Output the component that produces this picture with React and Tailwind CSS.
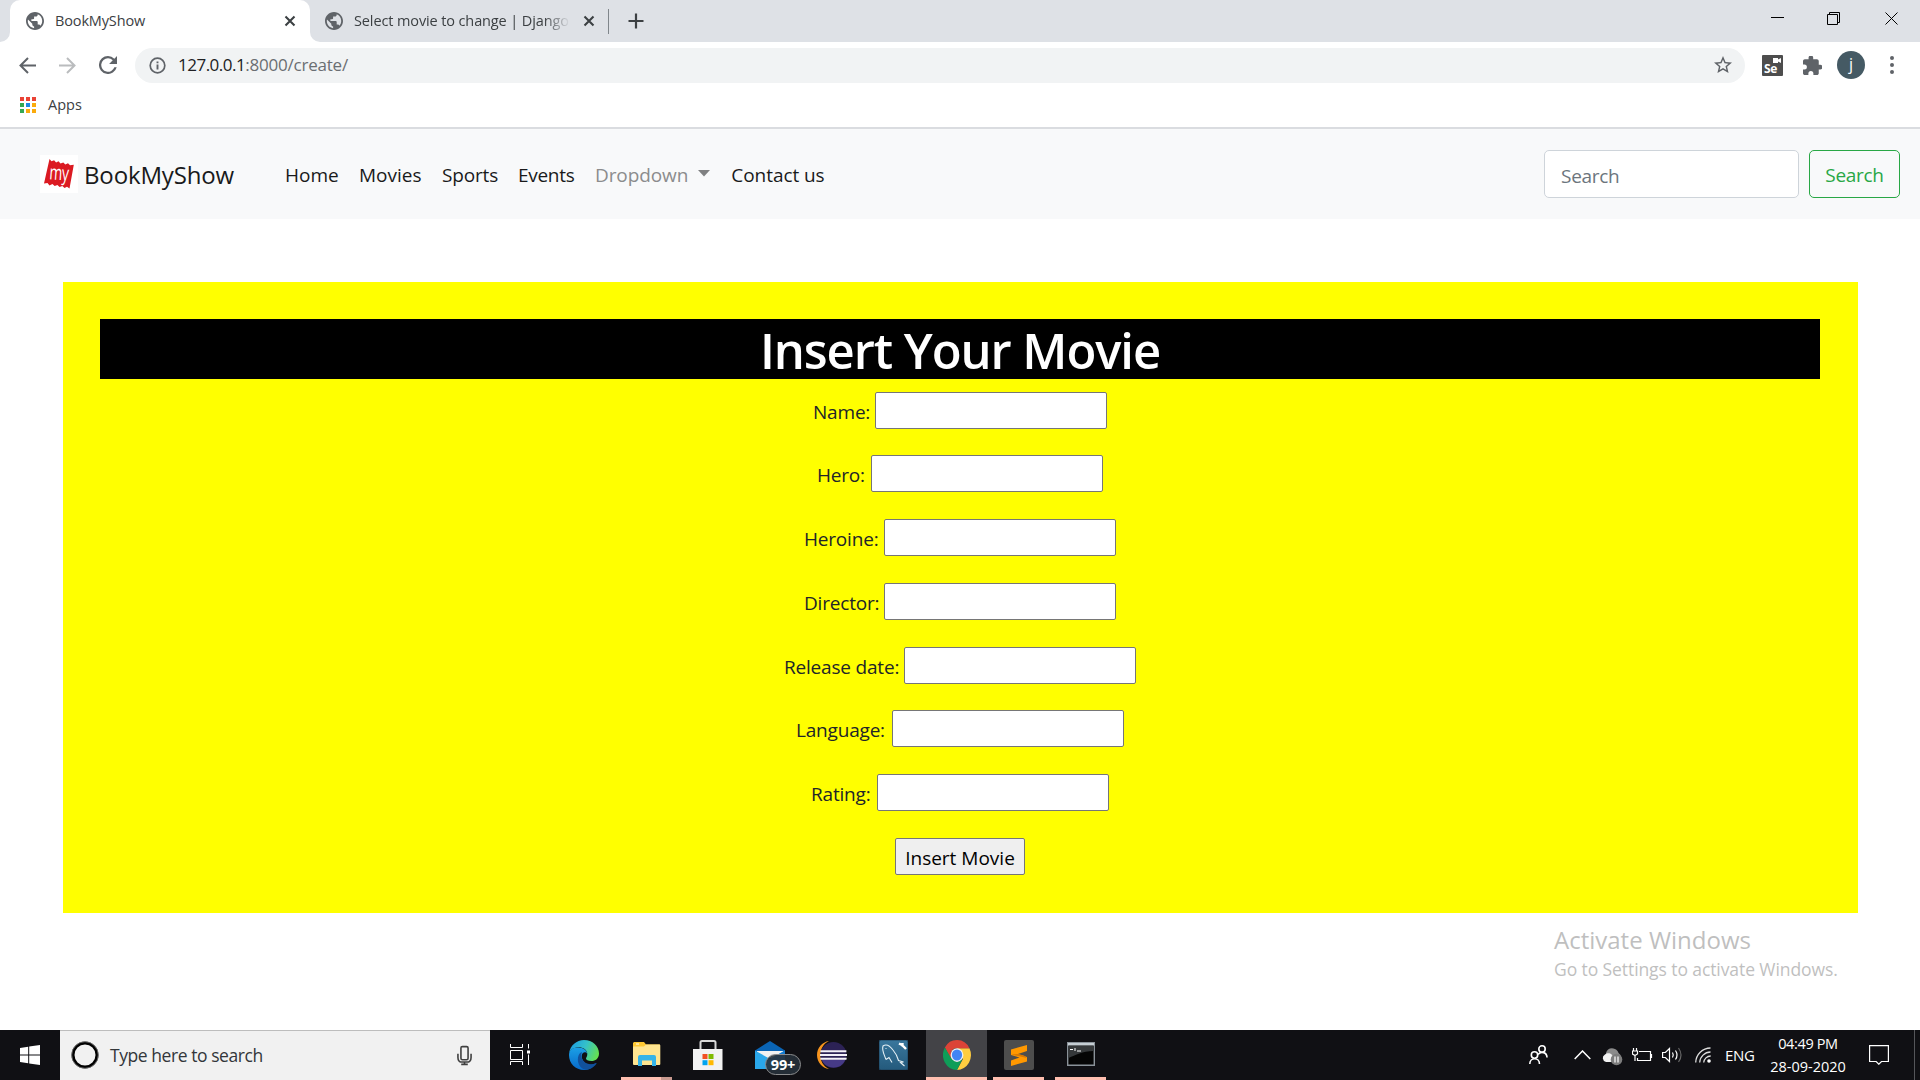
import React from "react";

const Icon = ({ w, h, box, className = "", children, ...rest }) => (
  <svg width={w} height={h} viewBox={box || `0 0 ${w} ${h}`} className={`block shrink-0 ${className}`} fill="none" {...rest}>
    {children}
  </svg>
);

const Globe = ({ className = "" }) => (
  <Icon w={18} h={18} box="2 2 20 20" className={className}>
    <path fill="#5f6368" d="M12 2C6.48 2 2 6.48 2 12s4.48 10 10 10 10-4.480 10-10S17.520 2 12 2zm-1 17.930c-3.950-.490-7-3.850-7-7.930 0-.620.080-1.210.210-1.790L9 15v1c0 1.100.9 2 2 2v1.930zm6.900-2.540c-.260-.810-1-1.390-1.900-1.390h-1v-3c0-.550-.450-1-1-1H8v-2h2c.550 0 1-.450 1-1V7h2c1.100 0 2-.9 2-2v-.410c2.930 1.190 5 4.060 5 7.410 0 2.080-.8 3.970-2.100 5.390z" />
  </Icon>
);

const Close = ({ className = "" }) => (
  <Icon w={12} h={12} className={className} stroke="#3c4043" strokeWidth="2.1">
    <path d="M1.500 1.500l9 9M10.500 1.500l-9 9" />
  </Icon>
);

function TabStrip() {
  return (
    <div className="flex h-[42px] items-stretch bg-[#dee1e6] text-[14.5px] text-[#3c4043]">
      <div className="relative ml-[10px] flex w-[300px] items-center rounded-t-[10px] bg-white pl-4 pr-[14px]">
        <Icon w={10} h={10} className="absolute -left-[10px] bottom-0"><path d="M10 0v10H0A10 10 0 0 0 10 0z" fill="#fff" /></Icon>
        <Icon w={10} h={10} className="absolute -right-[10px] bottom-0"><path d="M0 0v10h10A10 10 0 0 1 0 0z" fill="#fff" /></Icon>
        <Globe />
        <span className="ml-[11px] flex-1 tracking-[-0.01em]">BookMyShow</span>
        <Close />
      </div>
      <div className="flex items-center pl-[15px]">
        <Globe />
        <span className="ml-[11px] w-[216px] whitespace-nowrap tracking-[-0.008em] [mask-image:linear-gradient(to_right,#000_88%,transparent)]">
          Select movie to change | Django
        </span>
        <Close className="ml-[13px]" />
      </div>
      <div className="ml-[13px] mt-[9px] h-[25px] w-px bg-[#80868b]" />
      <Icon w={16} h={16} className="ml-[19px] mt-[13px]" stroke="#3c4043" strokeWidth="2.2"><path d="M8 .5v15M.5 8h15" /></Icon>
      <div className="ml-auto flex pr-[22px] pt-3">
        <Icon w={13} h={13} className="mr-[43px]" stroke="#000"><path d="M0 5.500h13" /></Icon>
        <Icon w={13} h={13} className="mr-[45px]" stroke="#000"><path d="M.5 2.500h10v10H.5zM2.500 2.500v-2h10v10h-2" /></Icon>
        <Icon w={13} h={13} stroke="#000"><path d="M.5 .5l12 12M12.500 .5l-12 12" /></Icon>
      </div>
    </div>
  );
}

function Toolbar() {
  return (
    <div className="flex h-[45px] items-center pb-[1px] pl-[19px] pr-[26px] pt-[2px]">
      <Icon w={17} h={17} stroke="#5f6368" strokeWidth="2"><path d="M17 8.500H2M9 1L1.500 8.500 9 16" /></Icon>
      <Icon w={17} h={17} className="ml-[23px]" stroke="#babcbe" strokeWidth="2"><path d="M0 8.500h15M8 1l7.500 7.500L8 16" /></Icon>
      <Icon w={18} h={18} box="4 4 16 16" className="ml-[23px]"><path fill="#5f6368" d="M17.650 6.350A7.960 7.960 0 0 0 12 4a8 8 0 1 0 7.730 10h-2.080A6 6 0 1 1 12 6c1.660 0 3.140.690 4.220 1.780L13 11h7V4l-2.350 2.350z" /></Icon>
      <div className="ml-[18px] flex h-[35px] flex-1 items-center rounded-full bg-[#f1f3f4] pl-[14px] pr-[13px]">
        <Icon w={17} h={17} stroke="#5f6368" strokeWidth="1.700"><circle cx="8.500" cy="8.500" r="7.300" /><path d="M8.500 7.500v5M8.500 4.500v1.800" strokeWidth="1.900" /></Icon>
        <span className="ml-3 flex-1 text-[17px] tracking-[-0.012em] text-[#6a6e72]">
          <span className="tracking-[-0.03em] text-[#202124]">127.0.0.1</span>:8000/create/
        </span>
        <Icon w={18} h={18} box="2 2 20 20"><path fill="#5f6368" d="M22 9.240l-7.190-.620L12 2 9.190 8.630 2 9.240l5.460 4.730L5.820 21 12 17.270 18.180 21l-1.630-7.030L22 9.240zM12 15.400l-3.760 2.270 1-4.280-3.320-2.880 4.380-.380L12 6.100l1.710 4.040 4.380.380-3.320 2.880 1 4.280L12 15.400z" /></Icon>
      </div>
      <div className="relative ml-[17px] h-[21px] w-[21px] rounded-[1px] bg-[#4d4d4d] pl-[2px] text-[12px] font-bold leading-[28px] tracking-[-0.02em] text-white">
        Se
        <Icon w={8} h={5} className="absolute right-[2px] top-[3px]"><path d="M0 0h5v1.500L8 0v5L5 3.500V5H0z" fill="#fff" /></Icon>
      </div>
      <Icon w={19} h={19} box="2 1.500 20.500 20.500" className="ml-5"><path fill="#5f6368" d="M20.500 11H19V7c0-1.100-.9-2-2-2h-4V3.500a2.500 2.500 0 0 0-5 0V5H4c-1.100 0-2 .9-2 2v3.800h1.500a2.700 2.700 0 0 1 0 5.400H2V20c0 1.100.9 2 2 2h3.800v-1.500a2.700 2.700 0 0 1 5.400 0V22H17c1.100 0 2-.9 2-2v-4h1.500a2.500 2.500 0 0 0 0-5z" /></Icon>
      <div className="ml-[15px] flex h-7 w-7 items-center justify-center rounded-full bg-[#455a64] pb-[2px] text-[16px] text-white">j</div>
      <Icon w={4} h={18} className="ml-[25px]"><path fill="#5f6368" d="M2 0a2 2 0 1 1 0 4 2 2 0 0 1 0-4zm0 7a2 2 0 1 1 0 4 2 2 0 0 1 0-4zm0 7a2 2 0 1 1 0 4 2 2 0 0 1 0-4z" /></Icon>
    </div>
  );
}

const appColors = ["bg-[#ea4335]", "bg-[#ea4335]", "bg-[#ea4335]", "bg-[#34a853]", "bg-[#1e88e5]", "bg-[#fbab0c]", "bg-[#34a853]", "bg-[#fbab0c]", "bg-[#fbab0c]"];

function Bookmarks() {
  return (
    <div className="flex h-[42px] items-center gap-[12px] border-b-2 border-[#dadce0] pb-[4px] pl-5 text-[14.5px] text-[#3c4043]">
      <div className="grid grid-cols-3 gap-[2px]">
        {appColors.map((c, i) => <div key={i} className={`h-[4px] w-[4px] ${c}`} />)}
      </div>
      <span>Apps</span>
    </div>
  );
}

function Navbar() {
  return (
    <nav className="flex h-[90px] items-center bg-[#f8f9fa] pl-10 pr-5 text-[19px] text-[#191a1b]">
      <div className="relative flex h-[38px] w-[38px] items-center justify-center bg-white">
        <Icon w={30} h={30}>
          <path fill="#db1a22" d="M5.500 0l2 2.200 2.600-1 2 2.200L14.500 2.200l2 2.200 2.800-1 2 2.200L24 4.200l2 2 3.800-.500L25.500 29.500l-2.500-1.700-2.500 1.200-2.200-2-2.700 1-2.200-2-2.700 1-2.300-2L5.500 26.500 3.500 24 0 24.500z" />
        </Icon>
        <span className="absolute inset-0 flex origin-center rotate-[4deg] scale-x-[0.82] scale-y-[1.2] items-center justify-center pb-[4px] text-[17px] font-medium leading-none tracking-[-0.02em] text-white">my</span>
      </div>
      <span className="ml-[6px] w-[201px] pt-[2px] text-[24px] tracking-[-0.006em] text-[#191a1b]">BookMyShow</span>
      <div className="flex flex-1 items-center pt-[2px]">
        <span className="w-[74px]">Home</span>
        <span className="w-[83px]">Movies</span>
        <span className="w-[76px] tracking-[-0.009em]">Sports</span>
        <span className="w-[77px] tracking-[-0.015em]">Events</span>
        <span className="tracking-[-0.005em] text-[#8b8c8d]">Dropdown</span>
        <Icon w={12} h={7} className="-mt-[3px] ml-[10px] mr-[21px]"><path d="M0 0h12L6 6.500z" fill="#7f8081" /></Icon>
        <span className="tracking-[-0.003em]">Contact us</span>
      </div>
      <div className="flex h-12 w-[255px] items-center rounded-[5px] border border-[#ced4da] bg-white pl-[16px] pt-[4px] tracking-[-0.015em] text-[#6c757d]">Search</div>
      <button className="ml-[10px] h-12 w-[91px] rounded-[5px] border border-[#28a745] pt-[2px] tracking-[-0.015em] text-[#28a745]">Search</button>
    </nav>
  );
}

const fields = [
  ["Name:", "w-[62px]", "h-[63px]"],
  ["Hero:", "w-[54px]", "h-[64px]"],
  ["Heroine:", "w-[80px]", "h-[64px]"],
  ["Director:", "w-[80px]", "h-[64px]"],
  ["Release date:", "w-[120px]", "h-[63px]"],
  ["Language:", "w-[96px]", "h-[64px]"],
  ["Rating:", "w-[66px]", "h-[64px]"],
];

function MovieForm() {
  return (
    <main className="ml-[63px] mt-[63px] h-[631px] w-[1795px] bg-[#ffff00] pl-[37px] pr-[38px] pt-[37px] text-[19px] text-[#212529]">
      <h1 className="flex h-[60px] items-center justify-center bg-black pt-[3px] text-[49px] font-semibold tracking-[-0.022em] text-white">Insert Your Movie</h1>
      <div className="mt-[13px] flex flex-col">
        {fields.map(([label, w, h]) => (
          <label key={label} className={`flex justify-center ${h}`}>
            <span className={`whitespace-nowrap pt-[6px] tracking-[-0.01em] ${w}`}>{label}</span>
            <input className="h-[37px] w-[232px] rounded-[2px] border border-[#767676] bg-white" />
          </label>
        ))}
        <button className="mx-auto h-[37px] w-[130px] rounded-[2px] border border-[#767676] bg-[#efefef] pt-[3px] text-black">Insert Movie</button>
      </div>
    </main>
  );
}

const Edge = () => (
  <Icon w={30} h={30}>
    <defs>
      <linearGradient id="edgeTop" x1="0" y1=".3" x2="1" y2=".6"><stop stopColor="#1b9de2" /><stop offset=".5" stopColor="#35c1c9" /><stop offset="1" stopColor="#66e04e" /></linearGradient>
      <linearGradient id="edgeLeft" x1="0" y1="0" x2="0" y2="1"><stop stopColor="#1ba0e6" /><stop offset="1" stopColor="#0869c9" /></linearGradient>
    </defs>
    <path fill="url(#edgeLeft)" d="M0 15C0 9 5 7.500 9 7.500c6 0 9 3.500 9 6-1-1.500-3-1.500-4-.5-2 2-1.500 6 1 9 3 3.500 8 3.500 11.500 1.500C24 27.500 20 30 15 30 6.500 30 0 23.500 0 15z" />
    <path fill="#11519c" d="M9 17.500c.5-3 2-5 4-5.500-1.500 3-.5 7 2 9.500 3 3 8 3.500 12 1.500.5 0 .7.300.4.800C25 27 21 30 16.500 29.800 11.500 29 8 23 9 17.500z" />
    <path fill="url(#edgeTop)" d="M.2 13C1.200 5.500 7.500 0 15 0c8.500 0 15 6 15 13.500 0 5-3.700 7.500-7.500 7.500-3.500 0-5.500-1-5.500-2.500 0-1 1.300-1.700 1.300-4.500C18.300 10 14 7.300 9.500 7.300 5 7.300 1.500 9.500.2 13z" />
  </Icon>
);

const Explorer = () => (
  <Icon w={28} h={24} className="-mt-[2px]">
    <path fill="#ffc933" d="M1 0h10l2 2.500h14V8H0V1z" /><path fill="#fff" d="M3 1.500h3v1H3z" />
    <path fill="#ffe590" d="M0 4.500h11l2-2h13.500l.8.800V22a1 1 0 0 1-1 1H1a1 1 0 0 1-1-1z" />
    <path fill="#35b4e8" d="M5 15q0-2 2-2h14q2 0 2 2v9h-4v-5.500H9V24H5z" />
  </Icon>
);

const Store = () => (
  <Icon w={30} h={30}>
    <path stroke="#d8d8d8" strokeWidth="2" d="M7.500 10V2.500Q7.500 1 9 1h12q1.500 0 1.500 1.500V10" /><path fill="#f2f2f2" d="M0 9h29.500v21H0z" />
    <path fill="#f25022" d="M9.500 14h5v5h-5z" /><path fill="#7fba00" d="M15.500 14h5v5h-5z" /><path fill="#00a4ef" d="M9.500 20.200h5v5h-5z" /><path fill="#ffb900" d="M15.500 20.200h5v5h-5z" />
  </Icon>
);

const Mail = () => (
  <div className="relative h-[28px] w-[46px]">
    <Icon w={30} h={28}>
      <path fill="#0a64b4" d="M15 0l15 9.500V14H0V9.500z" /><path fill="#f1f1f1" d="M2 10h26v7H2z" />
      <path fill="#2aa7ea" d="M0 9.500L15 18 30 9.500V28H0z" /><path fill="#157bd2" d="M30 9.500V28L15 18z" />
    </Icon>
    <div className="absolute left-[10px] top-[13px] flex h-[21px] w-[36px] items-center justify-center rounded-full border border-[#8b8c8d] bg-[#27313a]/90 text-[14.5px] font-bold tracking-[-0.01em] text-white">99+</div>
  </div>
);

const Eclipse = () => (
  <Icon w={30} h={30}>
    <path fill="#f7941e" d="M12 1C5 2 0 8 0 15s5 13 12 14C6 26 3.500 21 3.500 15S6 4 12 1z" />
    <circle cx="16.500" cy="15" r="13" fill="#2c2255" /><path fill="#463a86" d="M4.500 19.500h24A13 13 0 0 1 4.500 19.500z" />
    <path fill="#f3f1f8" d="M3.600 10.200h25.800v2H3.200zM3 14h27v2H3zM3.200 17.800h26.600l-.4 2H3.600z" />
  </Icon>
);

const Workbench = () => (
  <Icon w={29} h={30}>
    <defs><linearGradient id="wb" x1="0" y1="0" x2="0" y2="1"><stop stopColor="#3a779d" /><stop offset="1" stopColor="#245a7c" /></linearGradient></defs>
    <rect width="29" height="30" rx="2" fill="url(#wb)" stroke="#1e4560" />
    <path stroke="#e6f0f5" strokeWidth="1.100" d="M7 19.500C5 14 2.500 10 4 6c3-2 7 0 10 4 3 3.500 4.500 7 5.500 10.500l5 1.500-3 .5 4 3.500M7 19.500l3-2 3 5M6.500 8.500h1" />
    <path stroke="#fff" strokeWidth="2.400" d="M20 3.500l3 1.500 4 4M23.500 3v3.500" />
  </Icon>
);

const Chrome = () => (
  <Icon w={28} h={30} box="0 0 48 48" preserveAspectRatio="none">
    <path fill="#ffcd40" d="M24 13h21.300A24 24 0 0 1 24 48l10.400-18z" />
    <path fill="#db4437" d="M3.200 12A24 24 0 0 1 45.300 13H24a11 11 0 0 0-10 6l-.5 11z" />
    <path fill="#0f9d58" d="M3.200 12L14.500 30 24 35l9.500-5L24 48A24 24 0 0 1 3.200 12z" />
    <circle cx="24" cy="24" r="11" fill="#f1f1f1" /><circle cx="24" cy="24" r="8.800" fill="#4285f4" />
  </Icon>
);

const Sublime = () => (
  <Icon w={30} h={30}>
    <rect width="30" height="30" rx="2" fill="#4d4d4d" />
    <path fill="#ff9800" d="M23 5v6l-9 3 9 3v4.500L7 26v-5.500l8.500-3L7 15V9.500z" /><path fill="#d97800" d="M7 14.500l16 3.500-3-2.500-6-1.500z" />
  </Icon>
);

const Cmd = () => (
  <Icon w={28} h={24} className="-mt-[2px]">
    <path fill="#050505" stroke="#8a9299" strokeWidth="1.400" d="M.7.700h26.600v22.600H.7z" /><path fill="#c5cdd3" d="M1 1h26v2.500H1z" />
    <path fill="#35383a" d="M1.500 4h25v5C15 9 9 13 1.500 16z" />
    <path stroke="#fff" d="M3 7.500h3M8 6v3M10 9h4" />
  </Icon>
);

function TaskApp({ active, bar, split, w, children }) {
  return (
    <div className={`relative flex h-[50px] shrink-0 items-center justify-center ${w} ${active ? "bg-[#434347]" : ""}`}>
      {children}
      {bar && <div className={`absolute bottom-0 left-0 h-[3px] bg-[#ffbfb0] ${split ? "w-[40px]" : "w-full"}`} />}
      {split && <div className="absolute bottom-0 right-0 h-[3px] w-[11px] bg-[#c99a90]" />}
    </div>
  );
}

function Taskbar() {
  return (
    <footer className="flex h-[50px] shrink-0 items-center bg-[#101014] text-white">
      <div className="flex w-[60px] justify-center">
        <Icon w={20} h={20}><path fill="#fff" d="M0 3l8.200-1.200v7.700H0zM9.200 1.600L20 0v9.500H9.200zM0 10.500h8.200v7.700L0 17zM9.200 10.500H20V20L9.200 18.400z" /></Icon>
      </div>
      <div className="flex h-full w-[430px] items-center border-t border-[#bdbdbd] bg-[#f1f1f1] pl-[11px] pr-[18px] text-[#33363a]">
        <Icon w={28} h={28} className="-mt-px"><circle cx="14" cy="14" r="12" stroke="#000" strokeWidth="3" /><circle cx="14" cy="14" r="13.300" stroke="#777" strokeWidth=".8" /></Icon>
        <span className="ml-[11px] flex-1 text-[17.5px] tracking-[-0.025em]">Type here to search</span>
        <Icon w={15} h={21} box="0 0 16 21" className="-mt-px" stroke="#404040" strokeWidth="1.700"><rect x="4.200" y="1" width="7.600" height="14" rx="1.500" /><path d="M1 8.500v4q0 5 4.500 5h5q4.500 0 4.500-5v-4M8 17.500V20M4.500 20h7" /></Icon>
      </div>
      <Icon w={21} h={21} className="ml-5 -mt-px" stroke="#fff"><path d="M.5 0v3.500h12V0M.5 6.500h12v9H.5zM.5 21v-3.500h12V21M18.500 0v4.500M18.500 10.500V21" /><path fill="#fff" stroke="none" d="M17 6.500h3v3h-3z" /></Icon>
      <div className="ml-[22px] flex items-center">
        <TaskApp w="w-[62px]"><Edge /></TaskApp>
        <div className="w-[6px]" />
        <TaskApp w="w-[51px]" bar split><Explorer /></TaskApp>
        <div className="w-[5px]" />
        <TaskApp w="w-[61px]"><Store /></TaskApp>
        <div className="w-[17px]" />
        <TaskApp w="w-[46px]"><Mail /></TaskApp>
        <TaskApp w="w-[62px]"><Eclipse /></TaskApp>
        <TaskApp w="w-[61px]"><Workbench /></TaskApp>
      </div>
      <div className="ml-[2px] flex items-center">
        <TaskApp w="w-[61px]" bar active><Chrome /></TaskApp>
        <div className="w-[6px]" />
        <TaskApp w="w-[51px]" bar><Sublime /></TaskApp>
        <div className="w-[11px]" />
        <TaskApp w="w-[51px]" bar><Cmd /></TaskApp>
      </div>
      <div className="ml-auto flex h-full items-center">
        <Icon w={19} h={20} stroke="#fff" strokeWidth="1.600"><circle cx="13" cy="4" r="3.200" /><circle cx="5.500" cy="10" r="3.200" /><path d="M10.500 19c0-7-9.700-7-9.700 0M9 9.500c3-4 9-2 9 3" /></Icon>
        <Icon w={17} h={10} className="ml-[26px]" stroke="#fff" strokeWidth="1.500"><path d="M.7 9L8.500 1l7.800 8" /></Icon>
        <Icon w={21} h={18} className="ml-[11px] mt-[3px]"><path fill="#8b8b8b" d="M4 5C5 1 9-1 13 1c2 1 3 2 3.500 4l2 2v3H4z" /><path fill="#f2f2f2" d="M4 14a4 4 0 0 1-1-7.500C5 4.500 9 5 10 7l3 3v4z" /><circle cx="14.500" cy="11.500" r="5.800" fill="#7d7d7d" /><path stroke="#fff" strokeWidth="1.200" d="M13 8.500v6M16 8.500v6" /></Icon>
        <Icon w={21} h={14} className="ml-[9px]" stroke="#fff" strokeWidth="1.200"><path d="M7 3.500h11.500v9H5.500V10M19.500 6v4M1.500 0v3M4.500 0v3M.5 3h5v3l-2.500 1.500L.5 6zM3 7.500V13" /></Icon>
        <Icon w={21} h={18} className="ml-[9px]" stroke="#fff" strokeWidth="1.200"><path d="M.6 6.500h2.800L7.500 2.500v13L3.400 11.500H.6zM10.500 6.500q1.500 2.500 0 5M13.500 4.500q3 4.500 0 9" /><path d="M16.500 2q5 7 0 14" stroke="#666" /></Icon>
        <Icon w={17} h={16} className="ml-[12px]" stroke="#ddd" strokeWidth="1.300"><path d="M.7 15.500A15 15 0 0 1 15.500 1M4.700 15.500A11 11 0 0 1 15.500 5M8.700 15.500a7 7 0 0 1 7-6.500" /><circle cx="14" cy="14" r="1.800" fill="#fff" stroke="none" /></Icon>
        <span className="ml-[13px] w-[30px] text-[15px] tracking-[-0.02em]">ENG</span>
        <div className="ml-[13px] flex w-[80px] flex-col items-center text-[14.5px] leading-[23px]">
          <span className="tracking-[-0.025em]">04:49 PM</span>
          <span>28-09-2020</span>
        </div>
        <Icon w={20} h={20} className="ml-[21px]" stroke="#fff" strokeWidth="1.200"><path d="M.6.600h18.800v15.900H12.500L9.800 19.200 7.200 16.500H.6z" /></Icon>
        <div className="ml-[25px] mr-[5px] h-full w-px bg-[#55565a]" />
      </div>
    </footer>
  );
}

export default function App() {
  return (
    <div className="flex h-[1080px] w-[1920px] flex-col overflow-hidden bg-white font-['Open_Sans',sans-serif]">
      <TabStrip />
      <Toolbar />
      <Bookmarks />
      <Navbar />
      <MovieForm />
      <div className="flex-1 pl-[1554px] pt-[10px] text-[#bfbfbf]">
        <div className="text-[24px] leading-[34px]">Activate Windows</div>
        <div className="text-[17.5px] leading-[24px] tracking-[-0.005em]">Go to Settings to activate Windows.</div>
      </div>
      <Taskbar />
    </div>
  );
}
